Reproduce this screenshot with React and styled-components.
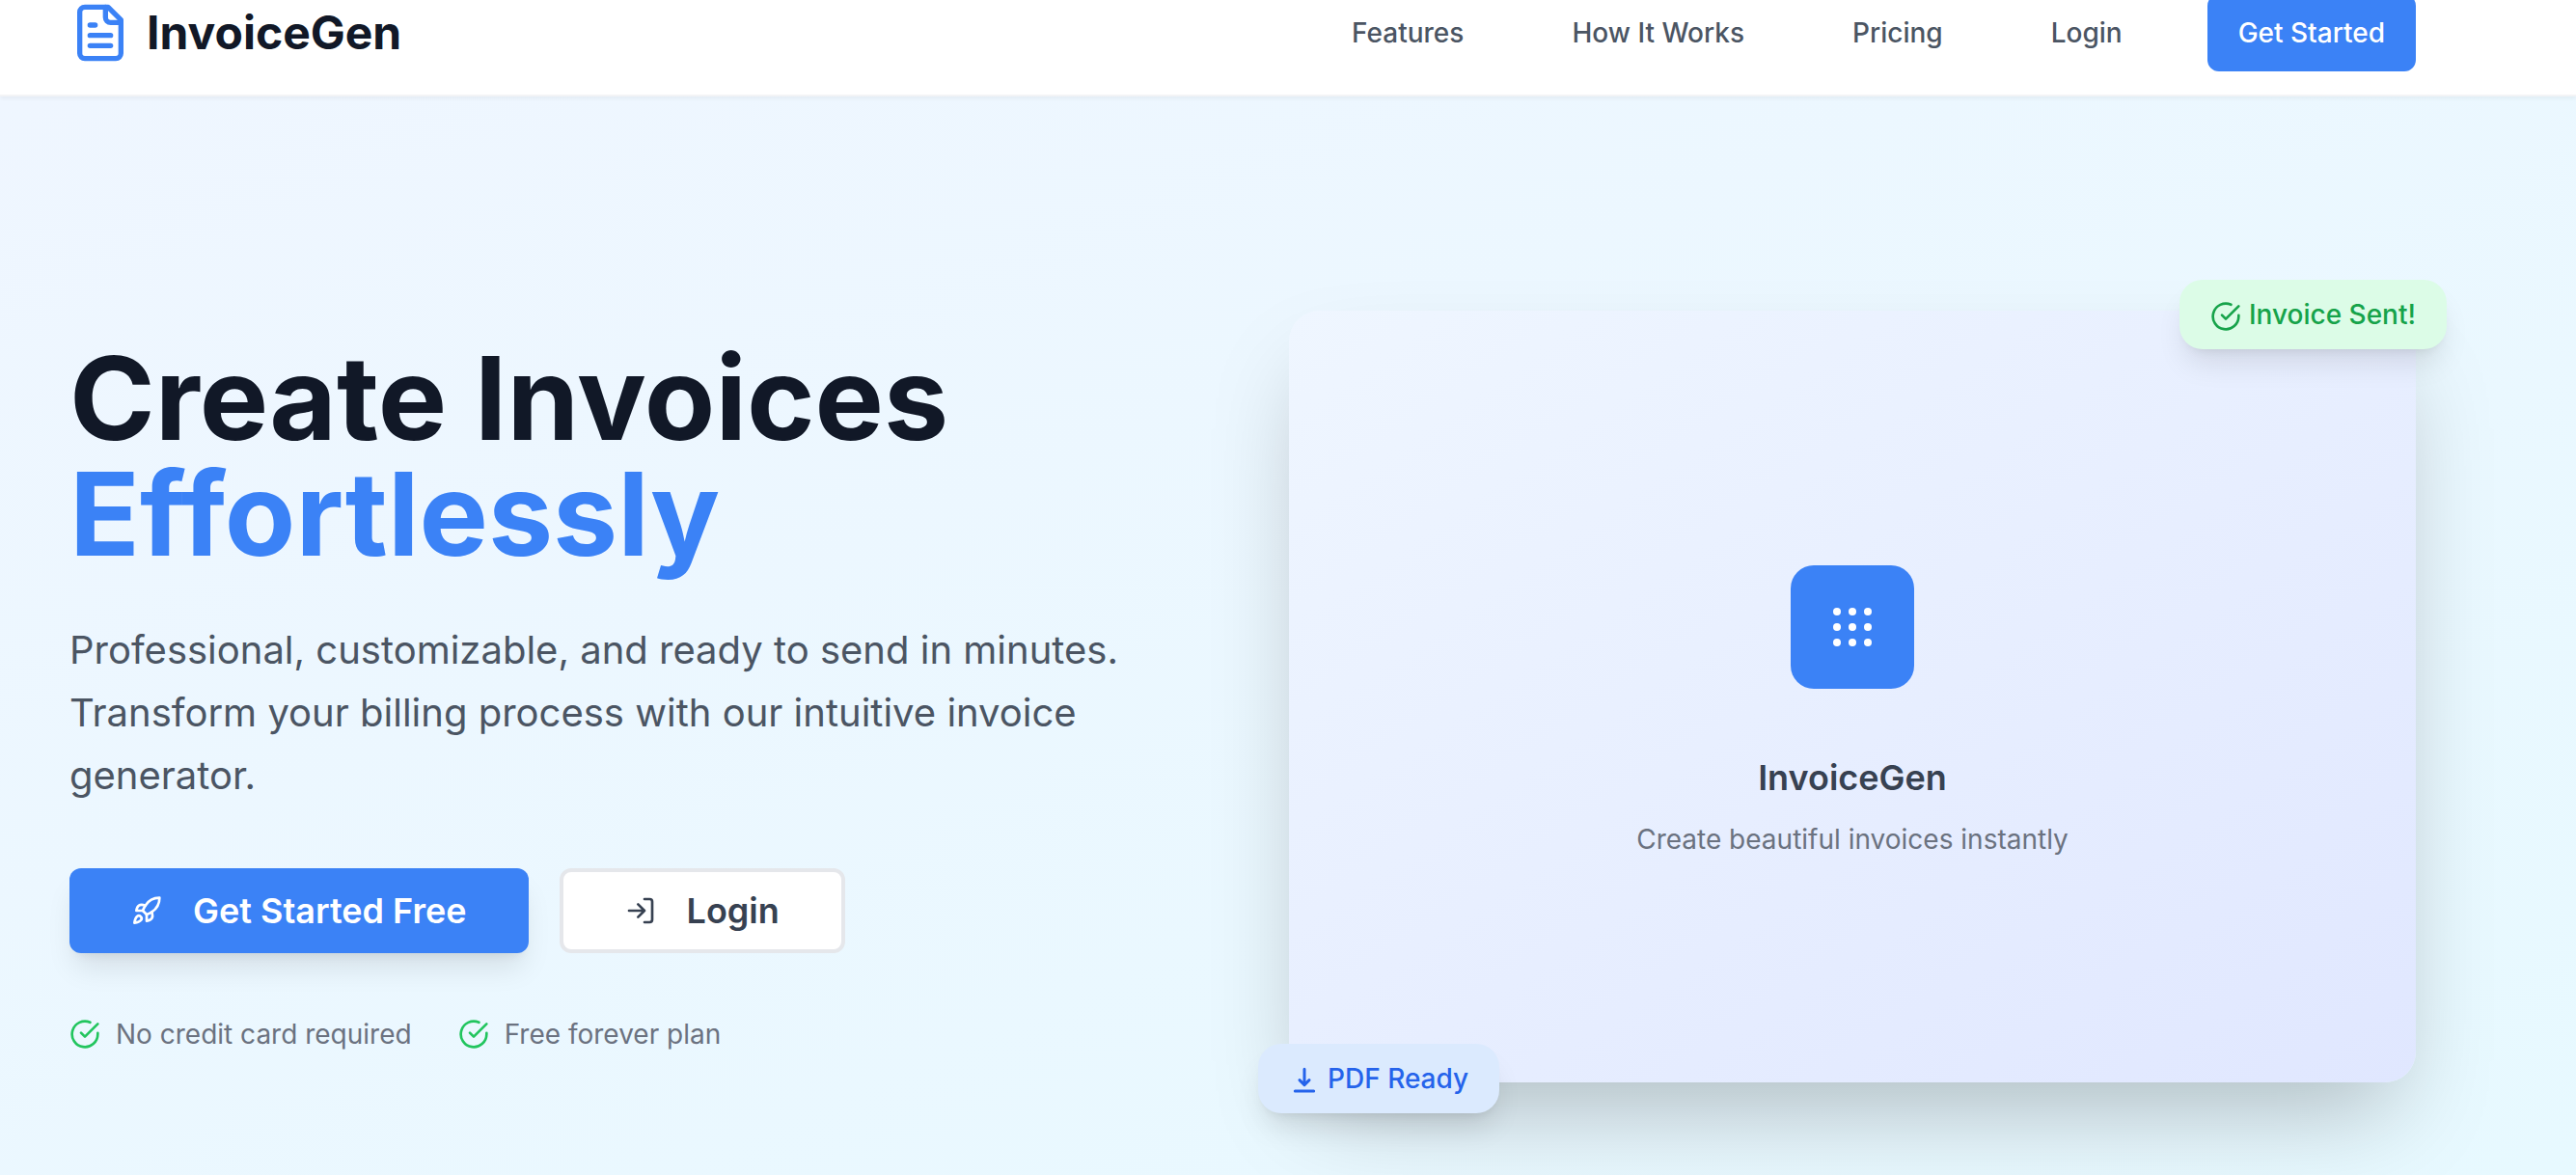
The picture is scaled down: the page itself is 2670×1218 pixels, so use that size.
import React from "react";
import styled, { createGlobalStyle } from "styled-components";

const GlobalStyle = createGlobalStyle`
  *, *::before, *::after { box-sizing: border-box; }
  body {
    margin: 0;
    background: #ffffff;
    font-family: Inter, "Liberation Sans", sans-serif;
    font-size: 28px;
    line-height: 40px;
    color: #111827;
    -webkit-font-smoothing: antialiased;
  }
  h1, h2, p, ul { margin: 0; padding: 0; }
  a { color: inherit; text-decoration: none; }
  button { font-family: inherit; cursor: pointer; }
`;

const Page = styled.div`
  min-height: 100vh;
  display: flex;
  flex-direction: column;
  overflow: hidden;
`;

/* The page is shown scrolled down a little, so the bar starts above the fold. */
const Header = styled.header`
  position: relative;
  z-index: 1;
  margin-top: -30px;
  height: 130px;
  padding: 0 166px 0 72px;
  display: flex;
  align-items: center;
  justify-content: space-between;
  background: #ffffff;
  border-bottom: 2px solid #f3f4f6;
  box-shadow: 0 2px 4px rgba(0, 0, 0, 0.05);
`;

const Brand = styled.a`
  display: flex;
  align-items: center;
  gap: 16px;
  color: #111827;
  font-size: 48px;
  line-height: 64px;
  font-weight: 700;
`;

const Nav = styled.nav`
  display: flex;
  align-items: center;
  gap: 64px;
`;

const NavLink = styled.a`
  padding: 16px 24px;
  color: #4b5563;
  font-weight: 500;
`;

const Icon = styled.svg`
  width: ${(p) => p.$size || 32}px;
  height: ${(p) => p.$size || 32}px;
  flex: none;
  fill: none;
  stroke: currentColor;
  stroke-width: 2;
  stroke-linecap: round;
  stroke-linejoin: round;
  color: ${(p) => p.$color || "inherit"};
`;

const NavButton = styled.button`
  height: 80px;
  padding: 0 32px;
  border: 0;
  border-radius: 12px;
  background: #3b82f6;
  color: #ffffff;
  font-size: 28px;
  line-height: 40px;
  font-weight: 500;
`;

const Hero = styled.main`
  flex: 1;
  display: grid;
  grid-template-columns: 1fr 1fr;
  align-items: center;
  align-content: start;
  gap: 96px;
  padding: 222px 166px 96px 72px;
  background: linear-gradient(to bottom right, #eff6ff, #e7f9ff);
`;

const Copy = styled.section`
  display: flex;
  flex-direction: column;
`;

const Title = styled.h1`
  font-size: 120px;
  line-height: 120px;
  font-weight: 700;
`;

const Accent = styled.span`
  display: block;
  color: #3b82f6;
`;

const Lead = styled.p`
  margin-top: 48px;
  color: #4b5563;
  font-size: 40px;
  line-height: 65px;
`;

const Actions = styled.div`
  display: flex;
  gap: 32px;
  margin-top: 64px;
`;

const ActionButton = styled.button`
  display: flex;
  align-items: center;
  gap: 32px;
  height: 88px;
  padding: 0 64px;
  border: ${(p) => (p.$primary ? "0" : "4px solid #e5e7eb")};
  border-radius: 12px;
  background: ${(p) => (p.$primary ? "#3b82f6" : "#ffffff")};
  color: ${(p) => (p.$primary ? "#ffffff" : "#374151")};
  box-shadow: ${(p) =>
    p.$primary
      ? "0 20px 30px -6px rgba(0, 0, 0, 0.1), 0 8px 12px -8px rgba(0, 0, 0, 0.1)"
      : "none"};
  font-size: 36px;
  line-height: 56px;
  font-weight: 600;
`;

const Perks = styled.ul`
  display: flex;
  gap: 48px;
  margin-top: 64px;
  list-style: none;
  color: #6b7280;
`;

const Perk = styled.li`
  display: flex;
  align-items: center;
  gap: 16px;
`;

const Preview = styled.section`
  position: relative;
  height: 800px;
  padding-top: 32px;
  display: flex;
  flex-direction: column;
  align-items: center;
  justify-content: center;
  border-radius: 32px;
  background: linear-gradient(to bottom right, #eff6ff, #e0e7ff);
  box-shadow: 0 50px 100px -24px rgba(0, 0, 0, 0.25);
`;

const Tile = styled.div`
  width: 128px;
  height: 128px;
  display: flex;
  align-items: center;
  justify-content: center;
  border-radius: 24px;
  background: #3b82f6;
  color: #ffffff;
`;

const PreviewTitle = styled.h2`
  margin-top: 64px;
  color: #374151;
  font-size: 36px;
  line-height: 56px;
  font-weight: 600;
`;

const PreviewText = styled.p`
  margin-top: 16px;
  color: #6b7280;
`;

const Badge = styled.div`
  position: absolute;
  ${(p) => (p.$corner === "top" ? "top: -32px; right: -32px;" : "bottom: -32px; left: -32px;")}
  display: flex;
  align-items: center;
  gap: 8px;
  padding: 16px 32px;
  border-radius: 24px;
  background: ${(p) => (p.$corner === "top" ? "#dcfce7" : "#dbeafe")};
  color: ${(p) => (p.$corner === "top" ? "#16a34a" : "#2563eb")};
  box-shadow: 0 20px 30px -6px rgba(0, 0, 0, 0.1), 0 8px 12px -8px rgba(0, 0, 0, 0.1);
  font-weight: 500;

  ${Icon} {
    margin-top: 4px;
  }
`;

const CheckIcon = (props) => (
  <Icon viewBox="0 0 24 24" aria-hidden="true" {...props}>
    <path d="M22 11.08V12a10 10 0 1 1-5.93-9.14" />
    <path d="m9 11 3 3L22 4" />
  </Icon>
);

const FileIcon = () => (
  <Icon viewBox="0 0 24 24" aria-hidden="true" $size={64} $color="#3b82f6">
    <path d="M15 2H6a2 2 0 0 0-2 2v16a2 2 0 0 0 2 2h12a2 2 0 0 0 2-2V7Z" />
    <path d="M14 2v4a2 2 0 0 0 2 2h4" />
    <path d="M10 9H8M16 13H8M16 17H8" />
  </Icon>
);

const RocketIcon = () => (
  <Icon viewBox="0 0 24 24" aria-hidden="true">
    <path d="M4.5 16.5c-1.5 1.26-2 5-2 5s3.74-.5 5-2c.71-.84.7-2.13-.09-2.91a2.18 2.18 0 0 0-2.91-.09z" />
    <path d="m12 15-3-3a22 22 0 0 1 2-3.95A12.88 12.88 0 0 1 22 2c0 2.72-.78 7.5-6 11a22.35 22.35 0 0 1-4 2z" />
    <path d="M9 12H4s.55-3.03 2-4c1.62-1.08 5 0 5 0" />
    <path d="M12 15v5s3.03-.55 4-2c1.08-1.62 0-5 0-5" />
  </Icon>
);

const LoginIcon = () => (
  <Icon viewBox="0 0 24 24" aria-hidden="true">
    <path d="M15 3h4a2 2 0 0 1 2 2v14a2 2 0 0 1-2 2h-4" />
    <path d="m10 17 5-5-5-5M15 12H3" />
  </Icon>
);

const DownloadIcon = () => (
  <Icon viewBox="0 0 24 24" aria-hidden="true">
    <path strokeWidth="2.25" d="M4.75 20.25h14.5M12 3.25v12M8.25 11.75 12 15.5l3.75-3.75" />
  </Icon>
);

const DOTS = [8, 24, 40];

const GridIcon = () => (
  <Icon viewBox="0 0 48 48" aria-hidden="true" $size={48}>
    {DOTS.map((cy) =>
      DOTS.map((cx) => (
        <circle key={`${cx}-${cy}`} cx={cx} cy={cy} r="4" fill="currentColor" stroke="none" />
      ))
    )}
  </Icon>
);

const LINKS = ["Features", "How It Works", "Pricing", "Login"];
const PERKS = ["No credit card required", "Free forever plan"];

export default function App() {
  return (
    <Page>
      <GlobalStyle />
      <Header>
        <Brand href="#">
          <FileIcon />
          InvoiceGen
        </Brand>
        <Nav>
          {LINKS.map((label) => (
            <NavLink key={label} href="#">
              {label}
            </NavLink>
          ))}
          <NavButton type="button">Get Started</NavButton>
        </Nav>
      </Header>
      <Hero>
        <Copy>
          <Title>
            Create Invoices <Accent>Effortlessly</Accent>
          </Title>
          <Lead>
            Professional, customizable, and ready to send in minutes. Transform your billing process
            with our intuitive invoice generator.
          </Lead>
          <Actions>
            <ActionButton type="button" $primary>
              <RocketIcon />
              Get Started Free
            </ActionButton>
            <ActionButton type="button">
              <LoginIcon />
              Login
            </ActionButton>
          </Actions>
          <Perks>
            {PERKS.map((perk) => (
              <Perk key={perk}>
                <CheckIcon $color="#22c55e" />
                {perk}
              </Perk>
            ))}
          </Perks>
        </Copy>
        <Preview>
          <Tile>
            <GridIcon />
          </Tile>
          <PreviewTitle>InvoiceGen</PreviewTitle>
          <PreviewText>Create beautiful invoices instantly</PreviewText>
          <Badge $corner="top">
            <CheckIcon />
            Invoice Sent!
          </Badge>
          <Badge $corner="bottom">
            <DownloadIcon />
            PDF Ready
          </Badge>
        </Preview>
      </Hero>
    </Page>
  );
}
